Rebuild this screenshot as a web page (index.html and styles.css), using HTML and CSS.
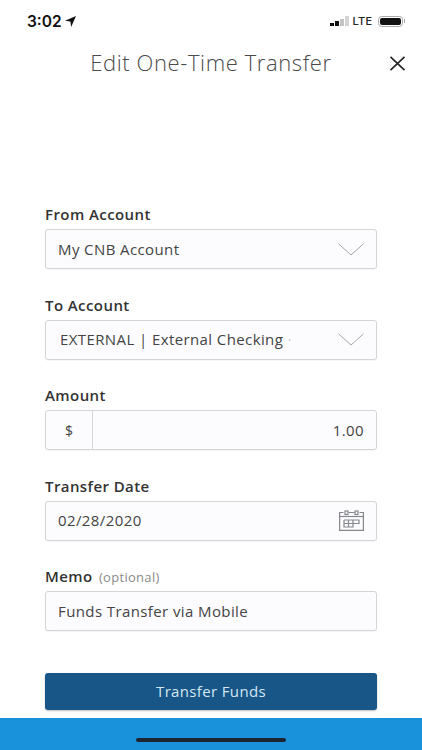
FILE: index.html
```html
<!DOCTYPE html>
<html lang="en">
<head>
<meta charset="utf-8">
<title>Edit One-Time Transfer</title>
<link rel="stylesheet" href="styles.css">
</head>
<body>
<div class="app">
  <div class="status">
    <div class="status-left">
      <span class="time">3:02</span>
      <svg class="arrow" width="11" height="11" viewBox="0 0 10 10"><path d="M10 0 L0 4.400 L4.900 5.100 L5.600 10 Z" fill="#111"/></svg>
    </div>
    <div class="status-right">
      <span class="signal"><i class="b1"></i><i class="b2"></i><i class="b3"></i><i class="b4"></i></span>
      <span class="lte">LTE</span>
      <span class="battery"><span class="fill"></span></span>
      <span class="nub"></span>
    </div>
  </div>
  <header class="head">
    <h1 class="title">Edit One-Time Transfer</h1>
    <svg class="close" width="17" height="15" viewBox="0 0 17 15"><path d="M1.500 .8 L15.500 14.200 M15.500 .8 L1.500 14.200" stroke="#222" stroke-width="1.600" fill="none"/></svg>
  </header>
  <form class="form">
    <div class="field">
      <label class="label">From Account</label>
      <div class="box"><span class="val">My CNB Account</span>
        <svg class="chev" width="26" height="13" viewBox="0 0 26 13"><path d="M.5 .8 L13 12 L25.500 .8" stroke="#a4a7ab" stroke-width="1" fill="none"/></svg>
      </div>
    </div>
    <div class="field">
      <label class="label">To Account</label>
      <div class="box"><span class="val val-ext">EXTERNAL | External Checking <span class="faint">·</span></span>
        <svg class="chev" width="26" height="13" viewBox="0 0 26 13"><path d="M.5 .8 L13 12 L25.500 .8" stroke="#a4a7ab" stroke-width="1" fill="none"/></svg>
      </div>
    </div>
    <div class="field">
      <label class="label">Amount</label>
      <div class="box box-amt"><span class="cur">$</span><span class="val">1.00</span></div>
    </div>
    <div class="field">
      <label class="label">Transfer Date</label>
      <div class="box"><span class="val">02/28/2020</span>
        <svg class="cal" width="25" height="21" viewBox="0 0 25 21" fill="none" stroke="#85888c" stroke-width="1.200"><path d="M4.500 2.500 H.6 V20.400 H24.400 V2.500 H20.500 M9.500 2.500 H15.500"/><path d="M.6 6.500 H24.400"/><rect x="6" y="1" width="3" height="3.500"/><rect x="16" y="1" width="3" height="3.500"/><path d="M5 10 H20 V13.500 H14 M5 10 V17 H14 V10 M5 13.500 H14 M9.500 10 V17"/></svg>
      </div>
    </div>
    <div class="field">
      <label class="label">Memo <span class="opt">(optional)</span></label>
      <div class="box"><span class="val">Funds Transfer via Mobile</span></div>
    </div>
    <button class="submit" type="button">Transfer Funds</button>
  </form>
  <footer class="foot"><span class="home"></span></footer>
</div>
</body>
</html>
```
FILE: styles.css
```css
* { box-sizing: border-box; }
html, body { margin: 0; padding: 0; background: #fff; }
.app {
  width: 422px; height: 750px; display: flex; flex-direction: column;
  font-family: "Open Sans", "Liberation Sans", sans-serif; color: #333; overflow: hidden;
}
.status { height: 42px; flex: none; display: flex; justify-content: space-between; align-items: center; padding: 0 17px 0 27px; }
.status-left { display: flex; align-items: center; gap: 3px; }
.time { font-family: Inter, "Liberation Sans", sans-serif; font-weight: 600; font-size: 15.500px; color: #111; }
.status-right { display: flex; align-items: center; }
.signal { display: flex; align-items: flex-end; gap: 1.500px; height: 10px; margin-right: 4px; }
.signal i { display: block; width: 3.500px; background: #111; }
.signal .b1 { height: 3px; }
.signal .b2 { height: 5px; }
.signal .b3 { height: 7px; background: #c4c4c4; }
.signal .b4 { height: 10px; background: #d4d4d4; }
.lte { font-family: Inter, "Liberation Sans", sans-serif; font-size: 11px; font-weight: 500; color: #222; margin-right: 5px; letter-spacing: .3px; }
.battery { width: 25px; height: 11px; border: 1px solid #aaa; border-radius: 3.500px; padding: 1px; display: flex; }
.fill { flex: 1; background: #111; border-radius: 2px; }
.nub { width: 1.500px; height: 4px; background: #aaa; margin-left: 1px; }
.head { height: 42px; flex: none; position: relative; display: flex; align-items: center; justify-content: center; padding-bottom: 2px; }
.title { margin: 0; font-weight: 300; font-size: 22px; color: #4a4a4a; letter-spacing: .6px; }
.close { position: absolute; left: 389px; top: 14px; }
.form { display: flex; flex-direction: column; padding: 0 45px; margin-top: 120px; flex: 1; }
.field { display: flex; flex-direction: column; height: 90.500px; }
.label { font-size: 15px; font-weight: 560; line-height: 20px; height: 25px; color: #333; letter-spacing: .42px; }
.opt { font-size: 13px; font-weight: 400; color: #8a8a8a; margin-left: 2px; letter-spacing: .3px; }
.box {
  height: 40px; flex: none; border: 1px solid #d5d5d7; border-radius: 3px; background: #fcfcfe;
  display: flex; align-items: center; justify-content: space-between; padding: 0 12px; box-shadow: 0 1px 1px rgba(0,0,0,.04);
}
.val { font-size: 15px; color: #444; letter-spacing: .4px; margin-bottom: 1px; }
.val-ext { margin-left: 2px; }
.faint { color: #ccc; }
.box-amt { padding: 0 12px 0 0; }
.cur { width: 47px; height: 100%; border-right: 1px solid #d5d5d7; display: flex; align-items: center; justify-content: center; font-size: 14px; color: #444; }
.submit {
  margin-top: 16px; height: 37px; flex: none; border: 0; border-radius: 3px; background: #175687; color: #d5e6f3;
  font-family: "Open Sans", "Liberation Sans", sans-serif; font-size: 15px; letter-spacing: .35px; box-shadow: 0 1px 2px rgba(0,0,0,.25);
}
.foot { height: 32px; flex: none; background: #1a91db; display: flex; justify-content: center; padding-top: 20px; }
.home { width: 150px; height: 4px; border-radius: 2px; background: #1c2530; }
```
